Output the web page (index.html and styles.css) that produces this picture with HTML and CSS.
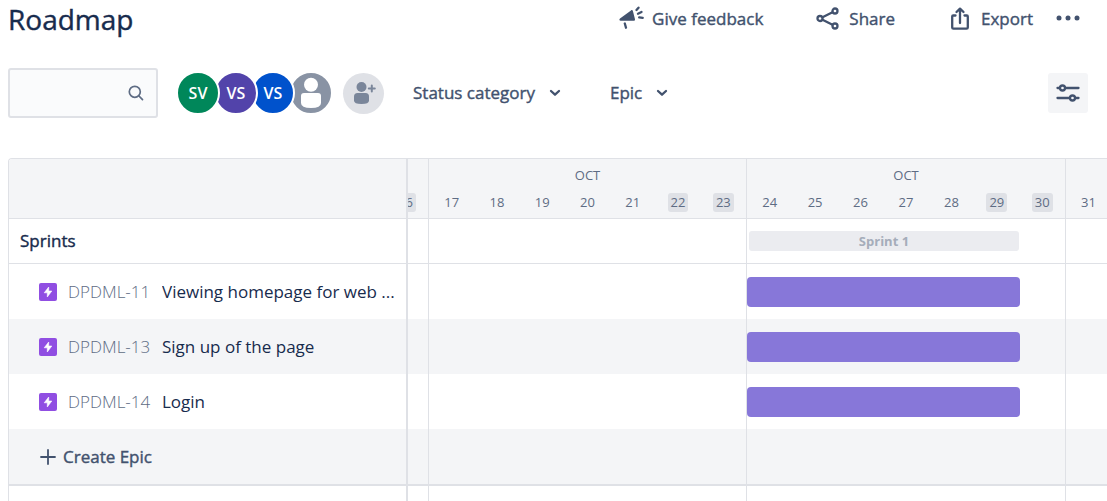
FILE: index.html
```html
<!DOCTYPE html>
<html lang="en">
<head>
<meta charset="utf-8">
<title>Roadmap</title>
<meta name="viewport" content="width=device-width, initial-scale=1">
<link rel="stylesheet" href="styles.css">
</head>
<body>
<header class="page-header">
  <h1 class="page-title">Roadmap</h1>
  <div class="actions">
    <button class="action" type="button">
      <svg class="icon" width="26" height="26" viewBox="0 0 26 26" fill="none" stroke="currentColor" stroke-width="2" stroke-linecap="round"><path d="M2 12.600 13 4.400c.8-.6 1.700-.3 1.900.6L17 13.300c.1.900-.3 1.500-1.100 1.500H2.600c-1.200 0-1.700-1.200-.6-2.200z" fill="currentColor" stroke="none"/><path d="M6.800 17.500 8 21.700M18.500 4l2-2.300M20 7.700l3.500-1.700M21.200 11.400l3.500.5" stroke-width="2.300"/></svg>
      Give feedback
    </button>
    <button class="action" type="button">
      <svg class="icon" width="26" height="26" viewBox="0 0 26 26" fill="none" stroke="currentColor" stroke-width="2.300"><circle cx="5" cy="12.500" r="2.500"/><circle cx="20" cy="5" r="2.500"/><circle cx="20" cy="20" r="2.500"/><path d="m7.500 11.300 10-5.100M7.500 13.700l10 5.100"/></svg>
      Share
    </button>
    <button class="action" type="button">
      <svg class="icon" width="26" height="26" viewBox="0 0 26 26" fill="none" stroke="currentColor" stroke-width="2.300" stroke-linecap="round" stroke-linejoin="round"><path d="M8.500 9.500H6.200Q5.200 9.500 5.200 10.500v11q0 1.200 1.200 1.200h13.200q1.200 0 1.200-1.200v-11q0-1-1-1h-2.300M13 17V3M9.500 6 13 2.600 16.500 6"/></svg>
      Export
    </button>
    <button class="more" type="button" aria-label="More actions">
      <svg width="24" height="24" viewBox="0 0 24 24" fill="currentColor"><circle cx="3" cy="11" r="2.500"/><circle cx="12" cy="11" r="2.500"/><circle cx="21" cy="11" r="2.500"/></svg>
    </button>
  </div>
</header>

<div class="filters">
  <label class="search">
    <input class="search-input" type="text" aria-label="Search roadmap">
    <svg class="search-icon" width="18" height="18" viewBox="0 0 18 18" fill="none" stroke="currentColor" stroke-width="1.700" stroke-linecap="round"><circle cx="8.800" cy="7.800" r="5.500"/><path d="m13 12 3.500 3.700"/></svg>
  </label>
  <div class="people">
    <button class="avatar avatar-green" type="button">SV</button>
    <button class="avatar avatar-purple" type="button">VS</button>
    <button class="avatar avatar-blue" type="button">VS</button>
    <button class="avatar avatar-gray" type="button" aria-label="Unassigned">
      <svg width="40" height="40" viewBox="0 0 40 40" fill="#fff"><circle cx="20" cy="11.800" r="7"/><path d="M10 23q0-3 3-3h14q3 0 3 3v7q0 5-10 5t-10-5z"/></svg>
    </button>
  </div>
  <button class="add-person" type="button" aria-label="Add people">
    <svg width="41" height="41" viewBox="0 0 41 41" fill="#7a869a"><circle cx="18.500" cy="14" r="5"/><path d="M11 23.500q0-3.500 3.500-3.500h8q3.500 0 3.500 3.500v4q0 3.500-7.500 3.500t-7.500-3.500z"/><path d="M28.800 12.500v6M25.800 15.500h6" stroke="#7a869a" stroke-width="2" stroke-linecap="round"/></svg>
  </button>
  <button class="dropdown dropdown-status" type="button">Status category
    <svg width="12" height="8" viewBox="0 0 12 8" fill="none" stroke="currentColor" stroke-width="2.300" stroke-linecap="round" stroke-linejoin="round"><path d="m2 2 4 3.700L10 2"/></svg>
  </button>
  <button class="dropdown" type="button">Epic
    <svg width="12" height="8" viewBox="0 0 12 8" fill="none" stroke="currentColor" stroke-width="2.300" stroke-linecap="round" stroke-linejoin="round"><path d="m2 2 4 3.700L10 2"/></svg>
  </button>
  <button class="settings" type="button" aria-label="View settings">
    <svg width="24" height="24" viewBox="0 0 24 24" fill="none" stroke="currentColor" stroke-width="2.300" stroke-linecap="round"><path d="M1.500 7h2.300M9.200 7h13.300M1.500 17h12.300M19.200 17h3.300"/><circle cx="6.500" cy="7" r="2.500"/><circle cx="16.500" cy="17" r="2.500"/></svg>
  </button>
</div>

<table class="roadmap">
  <colgroup><col class="col-name"><col class="col-edge"><col class="col-week"><col class="col-week-end"><col></colgroup>
  <thead>
    <tr class="row-head">
      <th class="name" scope="col" aria-label="Item"></th>
      <th scope="col"><div class="week week-edge"><span class="month"></span><div class="days"><span class="day"><span class="weekend">16</span></span></div></div></th>
      <th scope="col"><div class="week"><span class="month">OCT</span><div class="days"><span class="day">17</span><span class="day">18</span><span class="day">19</span><span class="day">20</span><span class="day">21</span><span class="day"><span class="weekend">22</span></span><span class="day"><span class="weekend">23</span></span></div></div></th>
      <th scope="col"><div class="week"><span class="month">OCT</span><div class="days"><span class="day">24</span><span class="day">25</span><span class="day">26</span><span class="day">27</span><span class="day">28</span><span class="day"><span class="weekend">29</span></span><span class="day"><span class="weekend">30</span></span></div></div></th>
      <th scope="col"><div class="week week-next"><span class="month"></span><div class="days"><span class="day">31</span></div></div></th>
    </tr>
  </thead>
  <tbody>
    <tr class="row-sprints">
      <th class="name" scope="row">Sprints</th><td></td><td></td>
      <td><div class="sprint">Sprint 1</div></td><td></td>
    </tr>
    <tr class="row-epic">
      <td class="name"><div class="epic"><svg class="epic-icon" width="18" height="18" viewBox="0 0 18 18"><rect width="18" height="18" rx="2" fill="#904ee2"/><path d="M9.700 4v4h3.100L8.300 14v-4.200H5.200z" fill="#fff" stroke="#fff" stroke-width=".6" stroke-linejoin="round"/></svg><span class="key">DPDML-11</span><span class="summary">Viewing homepage for web ...</span></div></td>
      <td></td><td></td><td><div class="bar" style="width:86%"></div></td><td></td>
    </tr>
    <tr class="row-epic row-shaded">
      <td class="name"><div class="epic"><svg class="epic-icon" width="18" height="18" viewBox="0 0 18 18"><rect width="18" height="18" rx="2" fill="#904ee2"/><path d="M9.700 4v4h3.100L8.300 14v-4.200H5.200z" fill="#fff" stroke="#fff" stroke-width=".6" stroke-linejoin="round"/></svg><span class="key">DPDML-13</span><span class="summary">Sign up of the page</span></div></td>
      <td></td><td></td><td><div class="bar" style="width:86%"></div></td><td></td>
    </tr>
    <tr class="row-epic">
      <td class="name"><div class="epic"><svg class="epic-icon" width="18" height="18" viewBox="0 0 18 18"><rect width="18" height="18" rx="2" fill="#904ee2"/><path d="M9.700 4v4h3.100L8.300 14v-4.200H5.200z" fill="#fff" stroke="#fff" stroke-width=".6" stroke-linejoin="round"/></svg><span class="key">DPDML-14</span><span class="summary">Login</span></div></td>
      <td></td><td></td><td><div class="bar" style="width:86%"></div></td><td></td>
    </tr>
    <tr class="row-create row-shaded">
      <td class="name"><button class="create" type="button"><svg width="18" height="18" viewBox="0 0 18 18" fill="none" stroke="currentColor" stroke-width="1.800" stroke-linecap="round"><path d="M9 2v14M2 9h14"/></svg>Create Epic</button></td>
      <td></td><td></td><td></td><td></td>
    </tr>
    <tr class="row-rest"><td class="name"></td><td></td><td></td><td></td><td></td></tr>
  </tbody>
</table>
</body>
</html>
```
FILE: styles.css
```css
* { box-sizing: border-box; }

body {
  margin: 0;
  padding-left: 8px;
  height: 100vh;
  display: flex;
  flex-direction: column;
  overflow: hidden;
  background: #fff;
  color: #172b4d;
  font-family: "Open Sans", "Noto Sans", sans-serif;
  font-size: 17px;
  line-height: 24px;
}

button {
  border: 0;
  padding: 0;
  background: none;
  color: #42526e;
  font: inherit;
  cursor: pointer;
}

/* medium weight: the family has none between regular and semibold */
.page-title, .action, .dropdown, .create, .row-sprints .name {
  -webkit-text-stroke: 0.4px currentColor;
}

svg { display: block; flex: none; }

.page-header {
  display: flex;
  align-items: center;
  justify-content: space-between;
  height: 38px;
  padding-right: 27px;
}

.page-title {
  margin: 0;
  font-size: 28px;
  line-height: 38px;
  font-weight: 400;
}

.actions { display: flex; align-items: center; }

.action {
  display: flex;
  align-items: center;
  gap: 8px;
  margin-right: 52px;
  white-space: nowrap;
}

.action:nth-child(3) { margin-right: 23px; }

.filters {
  display: flex;
  align-items: center;
  margin-top: 30px;
  padding-right: 19px;
  height: 50px;
}

.search {
  display: flex;
  align-items: center;
  width: 150px;
  height: 50px;
  padding: 0 12px 0 8px;
  border: 2px solid #dfe1e6;
  border-radius: 3px;
  background: #fafbfc;
  color: #5e6c84;
}

.search-input {
  flex: 1;
  min-width: 0;
  border: 0;
  outline: 0;
  background: none;
  color: #172b4d;
  font: inherit;
}

.people { display: flex; margin-left: 18px; }

.avatar {
  width: 44px;
  height: 44px;
  margin-right: -6px;
  border: 2px solid #fff;
  border-radius: 50%;
  color: #fff;
  font-size: 16px;
  font-weight: 600;
}

.avatar-green { background: #00875a; z-index: 3; }
.avatar-purple { background: #5243aa; z-index: 2; }
.avatar-blue { background: #0052cc; z-index: 1; margin-left: -1px; }
.avatar-gray { background: #8993a4; z-index: 0; margin-right: 0; }

.add-person {
  margin-left: 10px;
  border-radius: 50%;
  background: #dfe1e6;
}

.dropdown {
  display: flex;
  align-items: center;
  gap: 14px;
  white-space: nowrap;
}

.dropdown-status { margin: 0 49px 0 29px; }

.settings {
  display: grid;
  place-items: center;
  width: 40px;
  height: 40px;
  margin-left: auto;
  border-radius: 3px;
  background: #f4f5f7;
}

.roadmap {
  flex: 1;
  display: table;
  width: 100%;
  margin-top: 40px;
  table-layout: fixed;
  border-collapse: separate;
  border-spacing: 0;
  border-top: 1px solid #dfe1e6;
  border-left: 1px solid #dfe1e6;
  border-top-left-radius: 4px;
}

.col-name { width: 399px; }
.col-edge { width: 21px; }
.col-week { width: 318px; }
.col-week-end { width: 319px; }

.roadmap th,
.roadmap td {
  padding: 0;
  border-right: 1px solid #dfe1e6;
  text-align: left;
  font-weight: 400;
}

.roadmap th:last-child,
.roadmap td:last-child { border-right: 0; }

.roadmap .name { border-right-width: 2px; }

.row-head { height: 60px; background: #f4f5f7; }
.row-head th, .row-sprints th, .row-sprints td { border-bottom: 1px solid #dfe1e6; }
.row-head .name { border-top-left-radius: 3px; }

.week {
  overflow: hidden;
  color: #5e6c84;
  font-size: 13px;
  line-height: 19px;
}

.month { display: block; height: 19px; text-align: center; }
.days { display: flex; margin-top: 8px; }
.day { flex: 1 0 45px; text-align: center; }
.week-edge .days { justify-content: flex-end; }

.weekend {
  display: inline-block;
  padding: 0 3px;
  border-radius: 3px;
  background: #dfe1e6;
}

.row-sprints { height: 45px; }
.roadmap .row-sprints .name { padding-left: 11px; }

.sprint {
  width: 270px;
  height: 20px;
  margin-left: 2px;
  border-radius: 3px;
  background: #ebecf0;
  color: #a5adba;
  font-size: 13px;
  line-height: 20px;
  font-weight: 700;
  text-align: center;
}

.row-epic { height: 55px; }
.row-shaded { background: #f4f5f7; }

.epic {
  display: flex;
  align-items: center;
  padding-left: 30px;
  white-space: nowrap;
}

.key { min-width: 84px; margin: 0 10px 0 11px; color: #5e6c84; font-weight: 300; }
.summary { overflow: hidden; text-overflow: ellipsis; }

.bar {
  height: 30px;
  border-radius: 4px;
  background: #8777d9;
}

.row-create { height: 57px; }
.row-create td { border-bottom: 2px solid #dfe1e6; }

.create {
  display: flex;
  align-items: center;
  gap: 6px;
  margin-left: 30px;
}
```
